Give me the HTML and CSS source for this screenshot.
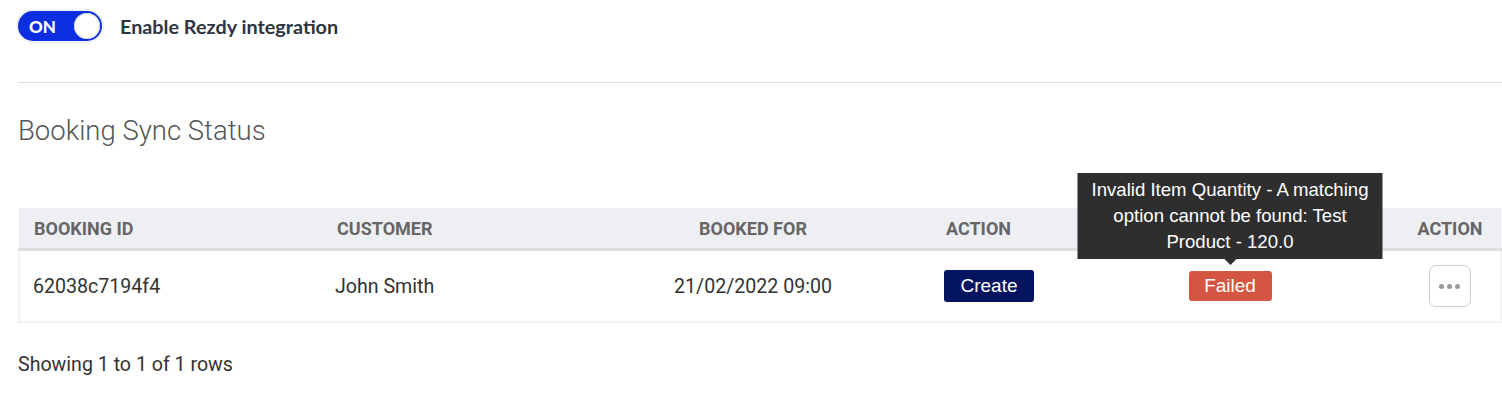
FILE: index.html
```html
<!DOCTYPE html>
<html lang="en">

<head>
    <meta charset="UTF-8">
    <title>Rezdy integration</title>
    <link rel="stylesheet" href="styles.css">
</head>

<body>
    <!-- integration toggle -->
    <div class="toggle-row">
        <div class="toggle">
            <span class="toggle-label">ON</span>
            <span class="toggle-knob"></span>
        </div>
        <span class="toggle-text">Enable Rezdy integration</span>
    </div>

    <hr class="divider">

    <h2 class="section-title">Booking Sync Status</h2>

    <!-- sync table -->
    <table class="sync-table">
        <colgroup>
            <col style="width: 303px">
            <col style="width: 253px">
            <col style="width: 356px">
            <col style="width: 130px">
            <col style="width: 338px">
            <col style="width: 102px">
        </colgroup>
        <thead>
            <tr>
                <th>Booking ID</th>
                <th>Customer</th>
                <th class="center">Booked For</th>
                <th>Action</th>
                <th class="center">Status</th>
                <th class="center">Action</th>
            </tr>
        </thead>
        <tbody>
            <tr>
                <td>62038c7194f4</td>
                <td>John Smith</td>
                <td class="center">21/02/2022 09:00</td>
                <td><button class="btn-create">Create</button></td>
                <td class="center">
                    <span class="status-wrap">
                        <span class="badge-failed">Failed</span>
                        <span class="tooltip">Invalid Item Quantity - A matching option cannot be found: Test Product - 120.0</span>
                    </span>
                </td>
                <td class="center">
                    <button class="btn-more">
                        <span class="dot"></span><span class="dot"></span><span class="dot"></span>
                    </button>
                </td>
            </tr>
        </tbody>
    </table>

    <p class="pager">Showing 1 to 1 of 1 rows</p>
</body>

</html>
```

FILE: styles.css
```css
body {
    margin: 0;
    padding: 0 0 0 18px;
    background-color: #fff;
    font-family: Roboto, "Liberation Sans", sans-serif;
    color: #333;
}

/* toggle row */
.toggle-row {
    display: flex;
    align-items: center;
    height: 52px;
}

.toggle {
    display: flex;
    align-items: center;
    justify-content: space-between;
    width: 84px;
    height: 30px;
    padding: 0 2px 0 10px;
    box-sizing: border-box;
    border-radius: 16px;
    background-color: #0a2ee0;
    box-shadow: 0 0 0 2px #eef0f6;
}

.toggle-label {
    font-family: Lato, "Liberation Sans", sans-serif;
    font-weight: 900;
    font-size: 17px;
    color: #fff;
    padding-left: 1px;
}

.toggle-knob {
    width: 26px;
    height: 26px;
    border-radius: 50%;
    background-color: #fff;
    box-shadow: inset 0 0 0 1px #d0d4e0;
}

.toggle-text {
    margin-left: 18px;
    font-family: Lato, "Liberation Sans", sans-serif;
    font-weight: 700;
    font-size: 19.8px;
    color: #2e3440;
}

.divider {
    border: none;
    border-top: 1px solid #dcdcdc;
    margin: 30px 0 0 0;
}

.section-title {
    font-weight: 300;
    font-size: 27.5px;
    color: #555;
    margin: 32px 0 0 0;
    line-height: 32px;
}

/* table */
.sync-table {
    margin-top: 61px;
    width: 1482px;
    border-collapse: collapse;
    table-layout: fixed;
}

.sync-table th {
    height: 40px;
    padding: 0 15px;
    background-color: #eeeff3;
    border-bottom: 3px solid #dedede;
    text-align: left;
    text-transform: uppercase;
    font-size: 18px;
    font-weight: 700;
    color: #666;
}

.sync-table td {
    height: 70px;
    padding: 0 13px;
    font-size: 19.6px;
    color: #333;
    border-bottom: 2px solid #f3f3f3;
}

.sync-table tbody tr {
    border-left: 2px solid #f3f3f3;
    border-right: 2px solid #f3f3f3;
}

.sync-table .center {
    text-align: center;
}

.btn-create {
    background-color: #05145e;
    color: #fff;
    border: none;
    border-radius: 3px;
    width: 90px;
    height: 32px;
    font-family: "Liberation Sans", Arial, sans-serif;
    font-size: 19px;
    padding: 0;
}

.status-wrap {
    position: relative;
    display: inline-block;
}

.badge-failed {
    display: inline-block;
    background-color: #d45542;
    color: #fff;
    border-radius: 3px;
    width: 83px;
    height: 30px;
    line-height: 30px;
    font-family: "Liberation Sans", Arial, sans-serif;
    font-size: 19px;
}

.tooltip {
    position: absolute;
    bottom: 42px;
    left: 50%;
    transform: translateX(-50%);
    width: 305px;
    padding: 4px 6px;
    box-sizing: border-box;
    background-color: #2e2e2e;
    color: #fff;
    font-family: "Liberation Sans", Arial, sans-serif;
    font-size: 18.6px;
    line-height: 26px;
    text-align: center;
}

.tooltip::after {
    content: "";
    position: absolute;
    top: 100%;
    left: 50%;
    margin-left: -6px;
    border-left: 6px solid transparent;
    border-right: 6px solid transparent;
    border-top: 6px solid #2e2e2e;
}

.btn-more {
    display: inline-flex;
    align-items: center;
    justify-content: center;
    gap: 3px;
    width: 42px;
    height: 42px;
    background-color: #fff;
    border: 1.5px solid #ccc;
    border-radius: 7px;
    padding: 0;
}

.dot {
    width: 5px;
    height: 5px;
    border-radius: 50%;
    background-color: #999;
}

.pager {
    margin: 30px 0 0 0;
    font-size: 19.6px;
    color: #333;
}
```
